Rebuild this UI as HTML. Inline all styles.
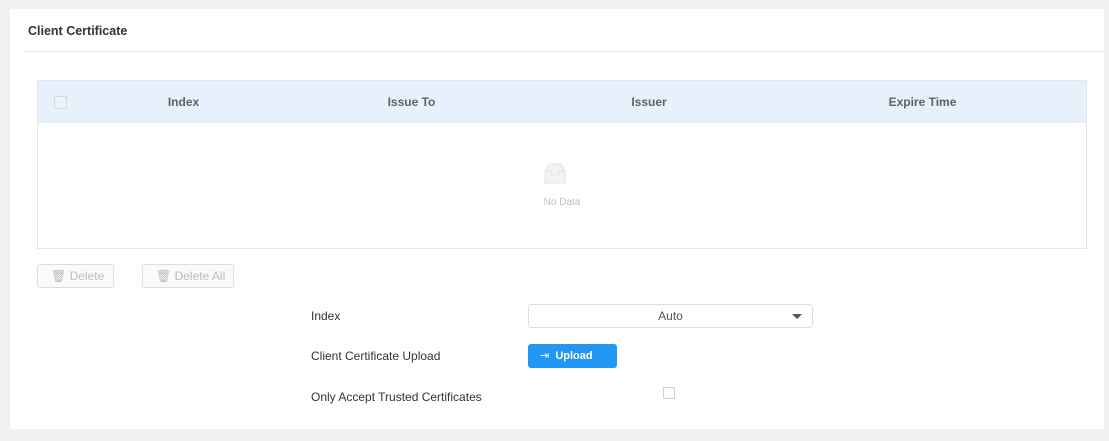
<!DOCTYPE html>
<html><head><style>
body{margin:0;width:1109px;height:441px;background:#f0f1f3;font-family:"Liberation Sans",Arial,sans-serif;position:relative;overflow:hidden}
.card{position:absolute;left:10px;top:9px;width:1094px;height:420px;background:#fff}
.abs{position:absolute}
.th{position:absolute;top:0;height:42px;line-height:42px;text-align:center;font-size:12px;font-weight:bold;color:#606266;border-right:1px solid #e3eef9}
.lbl{position:absolute;left:311px;font-size:12px;color:#333}
.btn{position:absolute;top:264px;height:22px;border:1px solid #ddd;border-radius:3px;background:#fafafa;color:#bbb;font-size:12px;line-height:22px}
</style></head><body>
<div class="card"></div>
<div class="abs" style="left:28px;top:24px;font-size:12.5px;font-weight:bold;color:#333">Client Certificate</div>
<div class="abs" style="left:24px;top:51px;width:1080px;height:1px;background:#e8e8e8"></div>
<div class="abs" style="left:37px;top:80px;width:1048px;height:167px;border:1px solid #e6e6e6">
 <div class="abs" style="left:0;top:0;width:1048px;height:42px;background:#e6f1fc"></div>
 <div class="th" style="left:0;width:45px"><span style="display:inline-block;width:11px;height:11px;border:1px solid #d4d9df;background:#eef2f6;vertical-align:middle"></span></div>
 <div class="th" style="left:46px;width:199px">Index</div>
 <div class="th" style="left:246px;width:255px">Issue To</div>
 <div class="th" style="left:502px;width:218px">Issuer</div>
 <div class="th" style="left:721px;width:327px;border-right:none">Expire Time</div>
 <svg class="abs" style="left:502px;top:80px" width="30" height="26" viewBox="0 0 30 26"><path d="M5 10 L9 3 H21 L25 10 V22 H5 Z" fill="#f3f3f3" stroke="#e3e3e3"/><path d="M5 10 H11 V14 H19 V10 H25" fill="none" stroke="#e3e3e3"/></svg>
 <div class="abs" style="left:0;width:1048px;top:116px;text-align:center;font-size:10px;color:#c0c0c0">No Data</div>
</div>
<div class="btn" style="left:37px;width:75px"><span style="margin-left:13px">🗑</span> Delete</div>
<div class="btn" style="left:142px;width:90px"><span style="margin-left:13px">🗑</span> Delete All</div>
<div class="lbl" style="top:309px">Index</div>
<div class="lbl" style="top:349px">Client Certificate Upload</div>
<div class="lbl" style="top:390px">Only Accept Trusted Certificates</div>
<div class="abs" style="left:528px;top:304px;width:283px;height:22px;border:1px solid #ddd;border-radius:3px;font-size:12px;color:#555;line-height:22px;text-align:center">Auto<span style="position:absolute;right:10px;top:9px;border-left:5px solid transparent;border-right:5px solid transparent;border-top:5px solid #555"></span></div>
<div class="abs" style="left:528px;top:344px;width:89px;height:24px;background:#2196f3;border-radius:3px;color:#fff;font-size:11px;font-weight:bold;line-height:24px"><span style="margin-left:12px;font-weight:normal">⇥</span>&nbsp; Upload</div>
<div class="abs" style="left:663px;top:387px;width:10px;height:10px;border:1px solid #d0d0d0"></div>
</body></html>
